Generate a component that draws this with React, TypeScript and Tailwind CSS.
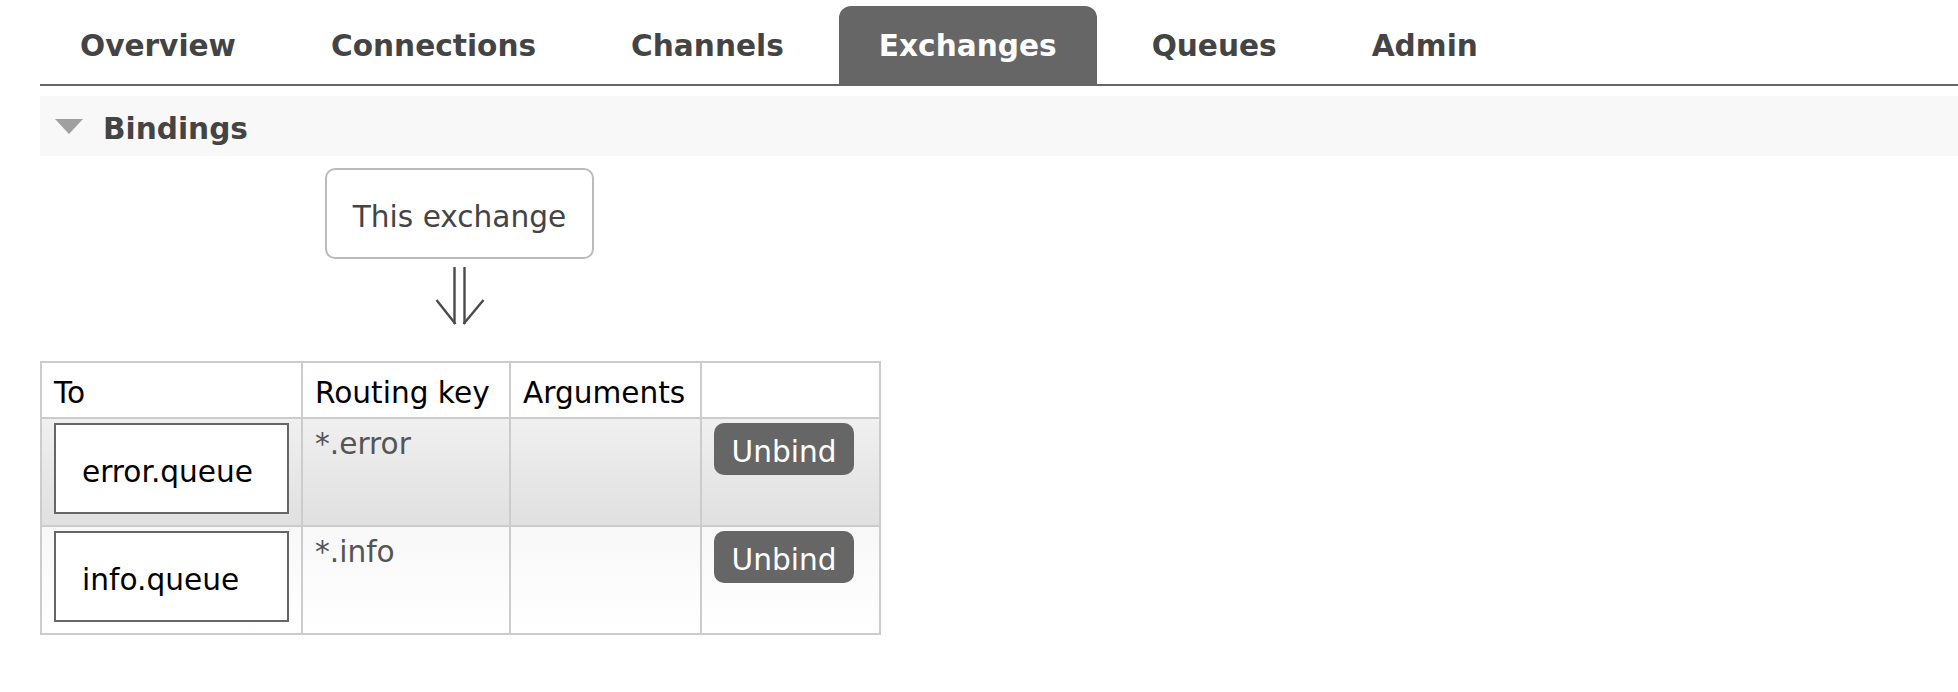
import React from 'react';

const tabs = ['Overview', 'Connections', 'Channels', 'Exchanges', 'Queues', 'Admin'];

const bindings = [
    { queue: 'error.queue', key: '*.error', rowClass: 'bg-linear-to-b from-[#f0f0f0] to-[#e0e0e0]' },
    { queue: 'info.queue', key: '*.info', rowClass: 'bg-linear-to-b from-[#f8f8f8] to-[#ffffff]' },
];

function DoubleArrow() {
    return (
        <svg width="50" height="60" viewBox="0 0 50 60" fill="none" stroke="#4a4a4a" strokeWidth="2.4">
            <path d="M19.5 1V58" />
            <path d="M29.5 1V58" />
            <path d="M1.5 34L20.5 58" />
            <path d="M48.5 34L28.5 58" />
        </svg>
    );
}

export default function App() {
    return (
        <div className="min-h-screen overflow-hidden bg-white pl-[40px] pt-[6px] font-['DejaVu_Sans',Verdana,sans-serif] text-[29.6px] leading-[36px] text-[#444]">
            <ul className="flex gap-[15px] border-b-2 border-[#666]">
                {tabs.map((tab) => (
                    <li
                        key={tab}
                        className={
                            tab === 'Exchanges'
                                ? 'rounded-t-[12px] bg-[#666] px-[40px] pb-[20px] pt-[22px] font-bold text-white'
                                : 'px-[40px] pb-[20px] pt-[22px] font-bold text-[#444]'
                        }
                    >
                        {tab}
                    </li>
                ))}
            </ul>

            <div className="mt-[10px] flex h-[60px] items-center gap-[20px] bg-[#f8f8f8] pl-[15px]">
                <svg width="28" height="15" viewBox="0 0 28 15">
                    <polygon points="0,0 28,0 14,15" fill="#a0a0a0" />
                </svg>
                <span className="pt-[5px] font-bold text-[#444]">Bindings</span>
            </div>

            <div className="mt-[12px] flex w-[839px] flex-col items-center">
                <div className="rounded-[10px] border-2 border-[#bbb] px-[26px] pb-[22px] pt-[29px] text-[#444]">This exchange</div>
                <div className="mt-[7px]">
                    <DoubleArrow />
                </div>
            </div>

            <table className="mt-[35px] w-[839px] table-fixed border-collapse text-black">
                <colgroup>
                    <col className="w-[261px]" />
                    <col className="w-[208px]" />
                    <col className="w-[191px]" />
                    <col className="w-[179px]" />
                </colgroup>
                <thead>
                    <tr className="bg-white">
                        <th className="border-2 border-[#ccc] px-[12px] pb-[6px] pt-[12px] text-left font-normal">To</th>
                        <th className="border-2 border-[#ccc] px-[12px] pb-[6px] pt-[12px] text-left font-normal">Routing key</th>
                        <th className="border-2 border-[#ccc] px-[12px] pb-[6px] pt-[12px] text-left font-normal">Arguments</th>
                        <th className="border-2 border-[#ccc] px-[12px] pb-[6px] pt-[12px]"></th>
                    </tr>
                </thead>
                <tbody>
                    {bindings.map((b) => (
                        <tr key={b.queue} className={b.rowClass}>
                            <td className="border-2 border-[#ccc] px-[12px] pb-[11px] pt-[4px] align-top">
                                <div className="border-2 border-[#666] bg-white pb-[22px] pl-[26px] pt-[29px] text-black">{b.queue}</div>
                            </td>
                            <td className="border-2 border-[#ccc] px-[12px] pb-[11px] pt-[7px] align-top text-[#555]">{b.key}</td>
                            <td className="border-2 border-[#ccc] px-[12px] pb-[11px] pt-[4px] align-top"></td>
                            <td className="border-2 border-[#ccc] px-[12px] pb-[11px] pt-[4px] align-top">
                                <button className="w-[140px] rounded-[10px] bg-[#666] pb-[5px] pt-[11px] text-center text-white">Unbind</button>
                            </td>
                        </tr>
                    ))}
                </tbody>
            </table>
        </div>
    );
}
